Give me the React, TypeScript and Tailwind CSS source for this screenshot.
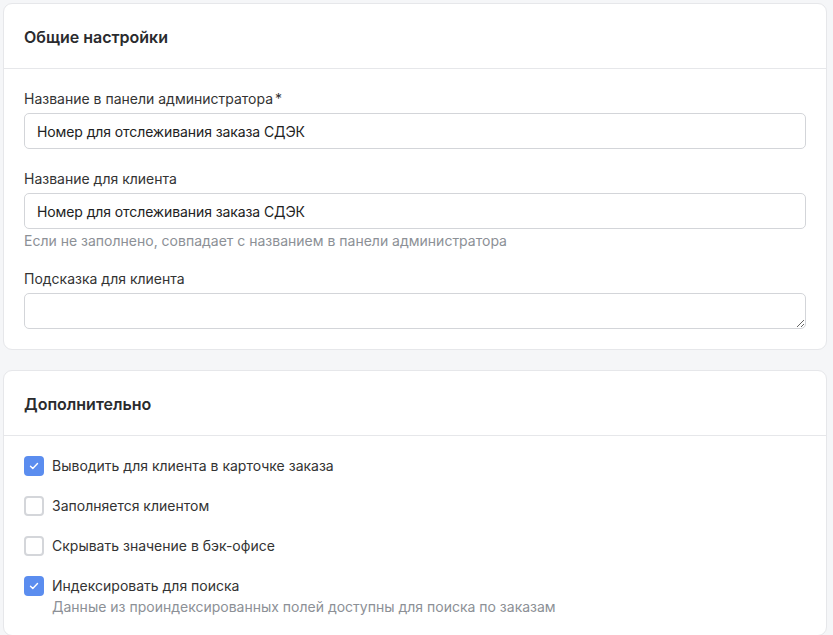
import React from 'react';

const font = { fontFamily: 'Inter, "Noto Sans", sans-serif' };

function Check({ on }: { on: boolean }) {
  return on ? (
    <span className="w-5 h-5 shrink-0 rounded-[4px] bg-[#5b8def] flex items-center justify-center">
      <svg width="12" height="12" viewBox="0 0 12 12" fill="none">
        <path d="M2.5 6.2l2.3 2.3 4.7-5" stroke="#fff" strokeWidth="1.4" strokeLinecap="round" strokeLinejoin="round" />
      </svg>
    </span>
  ) : (
    <span className="w-5 h-5 shrink-0 rounded-[4px] border-2 border-[#d4d6da] bg-white" />
  );
}

function Card({ title, children }: { title: string; children: React.ReactNode }) {
  return (
    <section className="bg-white border border-[#e6e7ea] rounded-[9px]">
      <div className="h-[65px] flex items-center px-[20px] border-b border-[#e6e7ea]">
        <h2 className="text-[16px] font-semibold text-[#2a2b2e] pt-[1px]">{title}</h2>
      </div>
      {children}
    </section>
  );
}

export default function App() {
  const fieldCls =
    'w-full h-9 border border-[#d3d5d9] rounded-[5px] px-3 text-[14px] tracking-[-0.1px] text-[#222] outline-none bg-white';
  return (
    <div style={font} className="min-h-[635px] bg-[#f5f6f8] pl-[3px] pr-[6px] pt-[3px] pb-6 flex flex-col gap-[20px]">
      <Card title="Общие настройки">
        <div className="px-[20px] pt-5 pb-5 flex flex-col gap-5">
          <div>
            <label className="block text-[14px] leading-5 text-[#333] mb-1">
              Название в панели администратора<span className="ml-0.5">*</span>
            </label>
            <input className={fieldCls} defaultValue="Номер для отслеживания заказа СДЭК" />
          </div>
          <div>
            <label className="block text-[14px] leading-5 text-[#333] mb-1">Название для клиента</label>
            <input className={fieldCls} defaultValue="Номер для отслеживания заказа СДЭК" />
            <p className="mt-1 text-[14px] leading-4 text-[#8c9096]">
              Если не заполнено, совпадает с названием в панели администратора
            </p>
          </div>
          <div>
            <label className="block text-[14px] leading-5 text-[#333] mb-1">Подсказка для клиента</label>
            <textarea className="block w-full h-9 border border-[#d3d5d9] rounded-[5px] px-3 py-1 text-[14px] outline-none" />
          </div>
        </div>
      </Card>

      <Card title="Дополнительно">
        <div className="px-[20px] pt-5 pb-5 flex flex-col gap-5">
          {[
            { t: 'Выводить для клиента в карточке заказа', on: true },
            { t: 'Заполняется клиентом', on: false },
            { t: 'Скрывать значение в бэк-офисе', on: false },
            {
              t: 'Индексировать для поиска',
              on: true,
              hint: 'Данные из проиндексированных полей доступны для поиска по заказам',
            },
          ].map((r) => (
            <div key={r.t} className="flex gap-2">
              <Check on={r.on} />
              <div>
                <div className="text-[14px] leading-5 text-[#333]">{r.t}</div>
                {r.hint && <div className="mt-[3px] text-[14px] leading-4 text-[#8c9096]">{r.hint}</div>}
              </div>
            </div>
          ))}
        </div>
      </Card>
    </div>
  );
}
